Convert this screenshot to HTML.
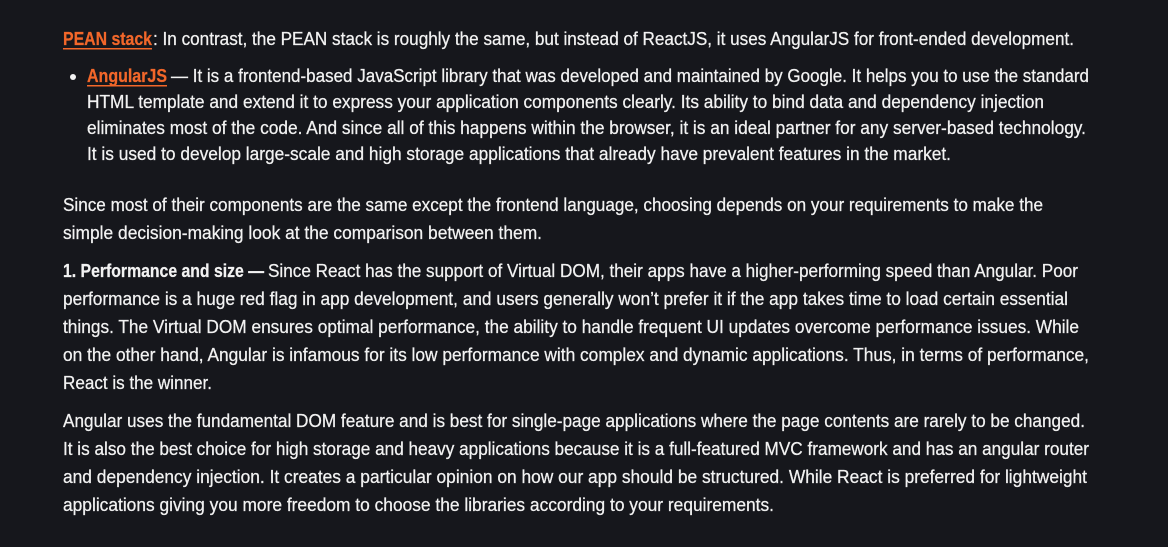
<!DOCTYPE html>
<html><head><meta charset="utf-8"><style>
html,body{margin:0;padding:0;background:#16171c;}
svg{display:block}
text{font-family:"Liberation Sans",sans-serif;font-size:18px;fill:#f2f2f2;stroke:#f2f2f2;stroke-width:0.25;}
.o{fill:#f2672a;stroke:#f2672a;font-weight:700}
.b{font-weight:700}
</style></head><body>
<svg width="1168" height="547" viewBox="0 0 1168 547">
<rect width="1168" height="547" fill="#16171c"/>
<text class="o" x="63" y="45" textLength="89" lengthAdjust="spacingAndGlyphs">PEAN stack</text>
<rect x="63" y="48" width="89" height="1.5" fill="#f2672a"/>
<text x="153" y="45" textLength="921" lengthAdjust="spacingAndGlyphs">: In contrast, the PEAN stack is roughly the same, but instead of ReactJS, it uses AngularJS for front-ended development.</text>

<circle cx="73" cy="77" r="3" fill="#f2f2f2"/>
<text class="o" x="87" y="82" textLength="80" lengthAdjust="spacingAndGlyphs">AngularJS</text>
<rect x="87" y="85" width="80" height="1.5" fill="#f2672a"/>
<text x="171" y="82" textLength="918" lengthAdjust="spacingAndGlyphs">— It is a frontend-based JavaScript library that was developed and maintained by Google. It helps you to use the standard</text>
<text x="87" y="108" textLength="957" lengthAdjust="spacingAndGlyphs">HTML template and extend it to express your application components clearly. Its ability to bind data and dependency injection</text>
<text x="87" y="134" textLength="999" lengthAdjust="spacingAndGlyphs">eliminates most of the code. And since all of this happens within the browser, it is an ideal partner for any server-based technology.</text>
<text x="87" y="160" textLength="864" lengthAdjust="spacingAndGlyphs">It is used to develop large-scale and high storage applications that already have prevalent features in the market.</text>

<text x="63" y="211" textLength="980" lengthAdjust="spacingAndGlyphs">Since most of their components are the same except the frontend language, choosing depends on your requirements to make the</text>
<text x="63" y="239" textLength="479" lengthAdjust="spacingAndGlyphs">simple decision-making look at the comparison between them.</text>

<text class="b" x="63" y="277" textLength="201" lengthAdjust="spacingAndGlyphs">1. Performance and size —</text>
<text x="268" y="277" textLength="810" lengthAdjust="spacingAndGlyphs">Since React has the support of Virtual DOM, their apps have a higher-performing speed than Angular. Poor</text>
<text x="63" y="305" textLength="1005" lengthAdjust="spacingAndGlyphs">performance is a huge red flag in app development, and users generally won’t prefer it if the app takes time to load certain essential</text>
<text x="63" y="333" textLength="1016" lengthAdjust="spacingAndGlyphs">things. The Virtual DOM ensures optimal performance, the ability to handle frequent UI updates overcome performance issues. While</text>
<text x="63" y="361" textLength="1026" lengthAdjust="spacingAndGlyphs">on the other hand, Angular is infamous for its low performance with complex and dynamic applications. Thus, in terms of performance,</text>
<text x="63" y="389" textLength="149" lengthAdjust="spacingAndGlyphs">React is the winner.</text>

<text x="63" y="427" textLength="1022" lengthAdjust="spacingAndGlyphs">Angular uses the fundamental DOM feature and is best for single-page applications where the page contents are rarely to be changed.</text>
<text x="63" y="455" textLength="1026" lengthAdjust="spacingAndGlyphs">It is also the best choice for high storage and heavy applications because it is a full-featured MVC framework and has an angular router</text>
<text x="63" y="483" textLength="1024" lengthAdjust="spacingAndGlyphs">and dependency injection. It creates a particular opinion on how our app should be structured. While React is preferred for lightweight</text>
<text x="63" y="511" textLength="711" lengthAdjust="spacingAndGlyphs">applications giving you more freedom to choose the libraries according to your requirements.</text>
</svg>
</body></html>
